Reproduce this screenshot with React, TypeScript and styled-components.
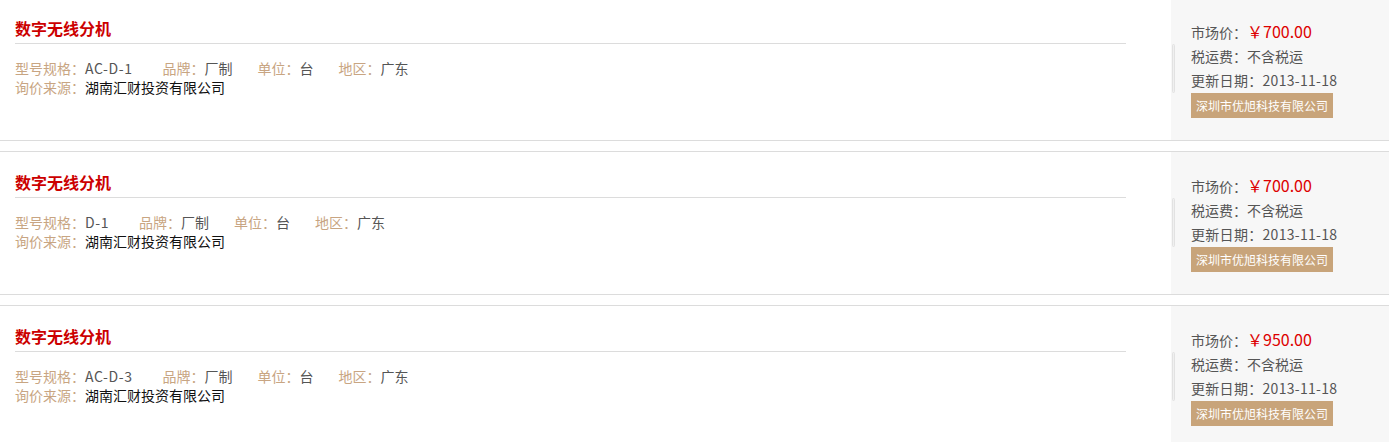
import styled, { createGlobalStyle } from 'styled-components';

const GlobalStyle = createGlobalStyle`
  body {
    margin: 0;
    background: #fff;
    font-family: "Noto Sans CJK SC", "Liberation Sans", sans-serif;
    overflow: hidden;
  }
`

type Product = {
  name: string;
  model: string;
  brand: string;
  unit: string;
  region: string;
  source: string;
  price: string;
  tax: string;
  date: string;
  seller: string;
}

const products: Product[] = [
  { name: '数字无线分机', model: 'AC-D-1', brand: '厂制', unit: '台', region: '广东', source: '湖南汇财投资有限公司', price: '￥700.00', tax: '不含税运', date: '2013-11-18', seller: '深圳市优旭科技有限公司' },
  { name: '数字无线分机', model: 'D-1', brand: '厂制', unit: '台', region: '广东', source: '湖南汇财投资有限公司', price: '￥700.00', tax: '不含税运', date: '2013-11-18', seller: '深圳市优旭科技有限公司' },
  { name: '数字无线分机', model: 'AC-D-3', brand: '厂制', unit: '台', region: '广东', source: '湖南汇财投资有限公司', price: '￥950.00', tax: '不含税运', date: '2013-11-18', seller: '深圳市优旭科技有限公司' },
]

export default function App() {
  return (
    <>
      <GlobalStyle />
      <List>
        {products.map((p, i) => (
          <Item key={i}>
            <Main>
              <Title>{p.name}</Title>
              <Row>
                <Field $wide><Label>型号规格：</Label><Value $latin>{p.model}</Value></Field>
                <Field><Label>品牌：</Label><Value>{p.brand}</Value></Field>
                <Field><Label>单位：</Label><Value>{p.unit}</Value></Field>
                <Field><Label>地区：</Label><Value>{p.region}</Value></Field>
              </Row>
              <Row>
                <Field><Label>询价来源：</Label><Value $dark>{p.source}</Value></Field>
              </Row>
            </Main>
            <Side>
              <Handle />
              <Info>
                <InfoLine>市场价：<Price>{p.price}</Price></InfoLine>
                <InfoLine>税运费：{p.tax}</InfoLine>
                <InfoLine $latin>更新日期：{p.date}</InfoLine>
                <Seller>{p.seller}</Seller>
              </Info>
            </Side>
          </Item>
        ))}
      </List>
    </>
  )
}

const List = styled.div`
  display: flex;
  flex-direction: column;
  gap: 10px;
  margin-top: -3px;
`

const Item = styled.div`
  display: flex;
  height: 142px;
  border-top: 1px solid #dcdcdc;
  border-bottom: 1px solid #dcdcdc;
`

const Main = styled.div`
  flex: 1;
  padding: 18px 45px 0 15px;
`

const Title = styled.h2`
  margin: 0 0 15px;
  padding-bottom: 3px;
  border-bottom: 1px solid #dcdcdc;
  font-size: 16px;
  line-height: 24px;
  font-weight: bold;
  color: #cc0000;
`

const Row = styled.div`
  display: flex;
  font-size: 14px;
  line-height: 19px;
`

const Field = styled.span<{ $wide?: boolean }>`
  margin-right: ${(p) => (p.$wide ? '30px' : '25px')};
`

const Label = styled.span`
  color: #c8a582;
`

const Value = styled.span<{ $dark?: boolean; $latin?: boolean }>`
  color: ${(p) => (p.$dark ? '#111' : '#555')};
  letter-spacing: ${(p) => (p.$latin ? '0.6px' : 'normal')};
`

const Side = styled.div`
  width: 218px;
  background: #f7f7f7;
  display: flex;
  align-items: flex-start;
`

const Handle = styled.div`
  width: 1px;
  height: 47px;
  margin: 46px 0 0 1px;
  border: 1px solid #e2e2e2;
  border-radius: 2px;
  background: #f0f0f0;
`

const Info = styled.div`
  padding: 21px 0 0 16px;
  display: flex;
  flex-direction: column;
  align-items: flex-start;
`

const InfoLine = styled.div<{ $latin?: boolean }>`
  font-size: 14px;
  line-height: 24px;
  color: #555;
  letter-spacing: ${(p) => (p.$latin ? '0.3px' : 'normal')};
`

const Price = styled.span`
  font-size: 16px;
  color: #dd0000;
`

const Seller = styled.div`
  margin-top: 1px;
  padding: 0 5px;
  height: 25px;
  line-height: 25px;
  font-size: 12px;
  color: #fff;
  background: #c8a47a;
`
